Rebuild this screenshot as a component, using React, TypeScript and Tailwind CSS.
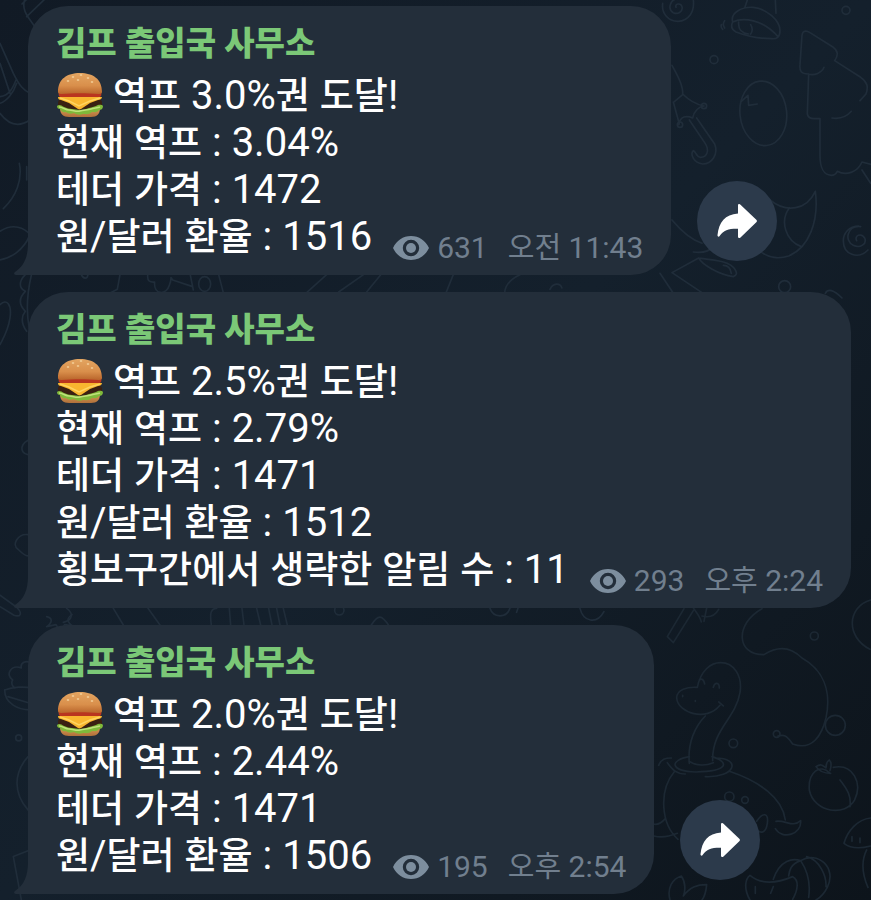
import React from 'react';

interface Alert {
  id: number;
  lines: string[];
  views: string;
  time: string;
  share: boolean;
}

const alerts: Alert[] = [
  {
    id: 1,
    lines: ['역프 3.0%권 도달!', '현재 역프 : 3.04%', '테더 가격 : 1472', '원/달러 환율 : 1516'],
    views: '631',
    time: '오전 11:43',
    share: true,
  },
  {
    id: 2,
    lines: [
      '역프 2.5%권 도달!',
      '현재 역프 : 2.79%',
      '테더 가격 : 1471',
      '원/달러 환율 : 1512',
      '횡보구간에서 생략한 알림 수 : 11',
    ],
    views: '293',
    time: '오후 2:24',
    share: false,
  },
  {
    id: 3,
    lines: ['역프 2.0%권 도달!', '현재 역프 : 2.44%', '테더 가격 : 1471', '원/달러 환율 : 1506'],
    views: '195',
    time: '오후 2:54',
    share: true,
  },
];

// Hangul runs are set a little smaller than the digits around them
function MixedText({ text, hangul }: { text: string; hangul: string }) {
  return (
    <>
      {text.split(/([가-힣]+)/).map((part, i) =>
        i % 2 ? (
          <span key={i} className={`leading-none ${hangul}`}>
            {part}
          </span>
        ) : (
          part
        )
      )}
    </>
  );
}

function Burger() {
  return (
    <svg viewBox="0 0 48 48" className="w-12 h-12 shrink-0" role="img" aria-label="햄버거">
      <defs>
        <linearGradient id="bun" x1="0" y1="0" x2="0" y2="1">
          <stop offset="0" stopColor="#e3a561" />
          <stop offset="0.6" stopColor="#d98f4b" />
          <stop offset="1" stopColor="#b9652b" />
        </linearGradient>
        <linearGradient id="heel" x1="0" y1="0" x2="0" y2="1">
          <stop offset="0" stopColor="#d99a55" />
          <stop offset="1" stopColor="#b0703a" />
        </linearGradient>
      </defs>
      <path d="M4 36h40c0 6-3 9-9 9H13c-6 0-9-3-9-9z" fill="url(#heel)" />
      <rect x="2" y="26" width="44" height="12" rx="5" fill="#3a2012" />
      <path d="M1 34c2-2 4-1 7 1 3 1 5 2 8 2s5 1 8 1 6-1 9-2 5-1 7-2 5-2 7 0c0 3-2 4-4 4-2 3-5 2-7 2-3 3-6 2-9 2-3 1-6 1-9-1-3 1-6 1-8-1-3 1-5-1-6-3-2 0-3-1-3-3z" fill="#7fb93a" />
      <path d="M3 35c4 0 6 3 10 3s7 2 11 1 8-1 11-2 6-1 9-2" stroke="#bfe27a" strokeWidth="1.500" fill="none" />
      <path d="M2 25h44c0 2-2 3-4 3l-8 3-9 6c-1 .6-2 .6-3 0l-9-6-8-3c-2 0-3-1-3-3z" fill="#f9b62f" />
      <path d="M4 26l9 3 10 5 11-5 10-3" stroke="#ffd460" strokeWidth="1.500" fill="none" />
      <path d="M3 20h42c1 3 0 5-2 5H5c-2 0-3-2-2-5z" fill="#b9351f" />
      <path d="M2 20C2 7 11 1 24 1s22 6 22 19c0 1-1 2-3 2-12-1-26-1-38 0-2 0-3-1-3-2z" fill="url(#bun)" />
      <g fill="#f8d9a4">
        <ellipse cx="17" cy="5" rx="1.300" ry="0.700" />
        <ellipse cx="25" cy="3" rx="1.300" ry="0.700" />
        <ellipse cx="32" cy="6" rx="1.300" ry="0.700" />
        <ellipse cx="22" cy="8" rx="1.300" ry="0.700" />
        <ellipse cx="12" cy="9" rx="1.300" ry="0.700" />
        <ellipse cx="36" cy="10" rx="1.300" ry="0.700" />
      </g>
    </svg>
  );
}

function Eye() {
  return (
    <svg viewBox="0 0 36 26" className="w-9 h-[26px] shrink-0" aria-hidden="true">
      <path
        fillRule="evenodd"
        fill="#7d8e9e"
        d="M18 1C10 1 3.500 5.500 0 13c3.500 7.500 10 12 18 12s14.500-4.500 18-12C32.500 5.500 26 1 18 1zm0 3.800a8.200 8.200 0 1 1 0 16.400 8.200 8.200 0 0 1 0-16.400z"
      />
      <circle cx="18" cy="13" r="5" fill="#7d8e9e" />
    </svg>
  );
}

function Wallpaper() {
  return (
    <svg
      viewBox="0 0 871 900"
      preserveAspectRatio="xMidYMid slice"
      className="absolute inset-0 w-full h-full"
      fill="none"
      stroke="#202d3a"
      strokeWidth="5"
      strokeLinecap="round"
      strokeLinejoin="round"
      aria-hidden="true"
    >
      {/* top right */}
      <g transform="translate(660 0) scale(0.3333)">
        <path d="M48 22c-4-12 14-14 18-2 4 16-14 24-26 18C22 28 30 0 50-4M8 10c-4 30 16 54 46 54 32-2 50-28 46-64" />
        <path d="M262 0l-8 24M346 0l2 40M218 66c-8-30 30-46 62-44 40 4 80 40 80 70 0 20-10 26-26 24-40 0-80-10-106-20-14-8-16-18-10-30zM218 66c30-14 90-10 136 44M236 66c-2 22 10 34 30 36M272 74c6 10 6 20 0 28M194 62c-6 8-6 14 0 22M184 74c-2 6 0 10 4 14" />
        <circle cx="162" cy="179" r="12" />
        <circle cx="558" cy="31" r="12" />
        <ellipse cx="310" cy="340" rx="70" ry="97" transform="rotate(-6 310 340)" />
        <path d="M244 304l20-18 2 30 26-4" />
        <path d="M444 222c-20 0-26-8-24-28l6-88c2-14 12-16 24-8l70 44c14 10 16 24 4 40l78 50c20 14 24 28 16 50l-18 20M444 222c20 6 42-4 48-20M446 222l-4 120c2 10 8 14 20 14h18v110c0 40 10 58 34 60 10 0 14-4 18-12 26 14 60 4 74-28l30 8M516 354c26 4 44-4 58-20M606 510l26 40" />
        <path d="M36 196c20 36 34 64 32 88l-24 20M40 306l18 66M68 282c18 18 44 32 64 36M56 374c4-26 24-28 42-20 4-20 14-32 34-36M88 360l46 68c18 26 4 44-12 44-14 0-14-18-22-20-10 10 0 36 28 40 28 0 48-30 36-60l-54-78" />
        <circle cx="60" cy="374" r="8" />
        <circle cx="132" cy="318" r="8" />
        <path d="M330 600c50 40 110 30 136-26 12 90-20 170-80 194-30 10-60 4-80-10M388 624c-30 40-10 100 36 116" />
        <path d="M590 722c-8-16 14-24 24-8 8 18-14 32-34 22-30-16-16-60 22-56M624 750c-30 30-74 14-74-28 0-20 16-44 46-44" />
        <path d="M36 660c30 36 60 60 90 70M100 756c30 4 50-4 60-16M116 774c10 20 60 50 104 56 10-4 12-10 6-20-14-26-60-30-110-36zM190 796c14 0 22 10 24 24M36 818l80-44M36 818l90 60M0 820l40 60" />
        <circle cx="374" cy="860" r="18" />
        <path d="M496 880c8-14 24-12 50 14" />
      </g>

      {/* bottom right */}
      <g stroke="#1c2833" transform="translate(640 600) scale(0.3333)">
        <path d="M132 26l-50 84 18 18 60-96M160 24c12 16 22 30 24 42M200 24l-8 40M236 28c-10 18-28 26-50 20" />
        <path d="M366 26c-80 44-80 138 6 138 40-26 80-24 114 10 60 34 90 94 72 180-12 50-40 100-100 78-20-30-30-28-44-24" />
        <circle cx="586" cy="376" r="30" />
        <circle cx="410" cy="402" r="10" />
        <circle cx="523" cy="108" r="12" />
        <circle cx="280" cy="430" r="13" />
        <circle cx="268" cy="590" r="14" />
        <circle cx="315" cy="600" r="10" />
        <path d="M692 0c-70 20-76 110-2 148" />
        <path d="M172 262c10-50 40-74 70-74 40 0 66 40 58 90-14 80-84 110-82 204M172 262c-30-2-62 6-62 32 4 46 90 72 130 22M236 306l14 12M178 240c8-6 14 0 16 12M220 262c4-16 18-16 18 2M196 348c-30 30-54 80-48 142M128 286v4M166 302v2" />
        <path d="M148 470c-60 10-60 44 20 46 100-2 100-30 48-46M148 484c20 14 50 14 72 4M226 474c80 0 60 60-30 56M56 496c8-20 20-22 38-22M82 488c16 22 28 34 54 34M104 514c-50 60-40 160 10 204M268 514c90 30 160 80 168 146M408 664c30-4 50 20 74-2 4 40-54 60-76 24M76 656c-16 18-30 18-36 16M112 700c-30 12-50 14-70 8M350 664c20-30 36-24 32 6-4 30-20 30-28 22" />
        <path d="M570 520c-30-30-66-4-62 50 14 70 110 80 136 30 24-50-4-110-64-98M572 520c-20 0-36-8-44-20 18-12 22 0 30 4 0-20 6-20 10-24 10 10 4 24 2 32M600 540c24 30 34 50 30 80" />
        <path d="M692 654c-40 4-70 40-80 76 20 16 50 16 80 8M636 710v14M660 714v14M680 750c-20 40-10 80 4 112" />
        <path d="M90 900c-10-36 8-64 34-72 14 20 12 46 6 60 20-26 40-34 70-34-2 22-6 36-14 46" />
        <path d="M330 900c-20-34-14-64 0-74 40 34 90 20 128 4 20 10 16 40 0 68M346 860v20M400 860l-8 20M400 838c20-60 60-64 82-56 50-30 110 20 80 80-10 20-20 30-34 38M482 782c-30 10-34 30-36 46M482 782c20 30 30 70 24 110M500 770c40 10 60 60 58 90" />
      </g>

      {/* left edge */}
      <g transform="scale(0.3333)">
        <path d="M74 0c-10 30 10 50 30 80M80 50L140-8M66 12l30-30M0 130l40 90c20 40 30 50 50 60M0 190l30 90M0 290c30-4 40-30 48-50M0 310c20-6 40-30 50-60M0 340c30 40 60 40 90 20M58 490c10 50-10 100-48 136M80 500v40M0 694c40-26 74-10 90 10-20 50-60 70-90 76" />
        <path d="M76 824c-20 20-20 40 0 50-20 20-20 40 0 60-16 20-10 40 4 60M94 826c-14 60-16 110-6 160M0 914c20-20 36 0 30 40-6 40-20 60-30 80" />
        <path d="M94 1320c-30 0-40 40-10 44M84 1604c-30-4-50 30-30 44 10 10 20 20 30 20M0 1786l50 36c20 20 10 30-8 24L0 1820" />
        <path d="M140 1850c20 4 16 20 0 30l28-6 12 20 14-20 24 4c-20-14-16-24-2-34M94 1990c-16-12-34 0-30 14-30-12-50 20-26 36-6 10 0 20 6 24M14 2070c26-10 60-10 80-6M14 2070c0 40 40 60 76 60M24 2090l66 20M84 2270c-44 50-44 110 0 160M40 2570l50-20M40 2570l24 130" />
        <circle cx="56" cy="2214" r="9" />
      </g>

      {/* strips between the bubbles */}
      <g transform="translate(0 260) scale(0.3333)">
        <path d="M244 44c6 14 18 14 20 0M360 44l-8 44-20 10M444 40c-6 30 14 26 20 26-4 40 36 40 44 10 10-24 0-30 10-16l60 20M570 40l10 50M656 44l14 54M980 44l-60 54M1096 40l-80 56M1146 40l-46 56" />
        <ellipse cx="614" cy="72" rx="18" ry="22" />
        <path d="M1360 44l-24 60M1560 44c-30 14-44 30-46 54M1650 88c10-20 30-20 36-4" />
      </g>
      <g transform="translate(60 595) scale(0.3333)">
        <path d="M20 40c20 14 20 34-10 42M160 40l30 50M264 40l36 50M470 40c-20 0-20 20-16 50M508 40l4 50M546 40l6 50M590 40l12 50M626 40l10 50M650 40l10 50M670 40l12 50M934 90c20-30 30-34 54 4M1290 40c10 30 50 30 60 0M1374 40l-4 12M1560 40c10 40 50 50 72 10" />
        <circle cx="838" cy="46" r="14" />
      </g>
    </svg>
  );
}

function ShareButton() {
  return (
    <button
      type="button"
      aria-label="공유"
      className="w-20 h-20 shrink-0 mb-[14px] rounded-full bg-[#2c3a4b] flex items-center justify-center"
    >
      <svg viewBox="0 0 40 34" className="w-10 h-[34px]" aria-hidden="true">
        <path
          d="M21 1.500v8C8 10.500 2 18 .5 31c-.2 2 1.500 2.300 2.300.8C6.500 26 12 24.500 21 24.700v8c0 1.500 1.500 1.800 2.500.8l15.800-15.200c.8-.8.8-1.700 0-2.500L23.500.7C22.500-.3 21 0 21 1.500z"
          fill="#fff"
        />
      </svg>
    </button>
  );
}

function AlertBubble({ alert }: { alert: Alert }) {
  const last = alert.lines.length - 1;

  return (
    <div className="relative px-7 pt-[15px] pb-3 bg-[#232e3a] rounded-[40px] rounded-bl-none">
      <svg viewBox="0 0 14 32" className="absolute right-full bottom-0 w-[14px] h-8" aria-hidden="true">
        <path d="M14 0c0 14-4 23-13 29-1.500 1.200-1 3 1 3h12z" fill="#232e3a" />
      </svg>

      <h2 className="mb-[5px] text-[33px] leading-[46px] font-black text-[#7bc877]">김프 출입국 사무소</h2>

      {alert.lines.map((line, i) => (
        <div key={line} className="flex items-end gap-[21px]">
          <p className={`flex items-center text-[40px] leading-[47px] text-white whitespace-pre ${i === last ? 'mb-[3px]' : ''}`}>
            {i === 0 && (
              <span className="h-[47px] pr-[9px] flex items-center">
                <Burger />
              </span>
            )}
            <span>
              <MixedText text={line} hangul="text-[37px] font-medium" />
            </span>
          </p>
          {i === last && (
            <div className="ml-auto flex items-center gap-2 h-[30px] text-[30px] leading-[30px] text-[#717f8e] whitespace-nowrap">
              <Eye />
              <span className="mr-3">{alert.views}</span>
              <time>
                <MixedText text={alert.time} hangul="text-[29px]" />
              </time>
            </div>
          )}
        </div>
      ))}
    </div>
  );
}

export default function App() {
  return (
    <main className="relative min-h-screen overflow-hidden bg-linear-to-br from-[#111a25] via-[#14202c] to-[#0d141b] font-['Roboto','Noto_Sans_CJK_KR',sans-serif]">
      <Wallpaper />
      <div className="relative flex flex-col gap-[17px] pl-7 pr-5 py-[6px]">
        {alerts.map((alert) => (
          <div key={alert.id} className="flex items-end gap-[26px]">
            <AlertBubble alert={alert} />
            {alert.share && <ShareButton />}
          </div>
        ))}
      </div>
    </main>
  );
}
